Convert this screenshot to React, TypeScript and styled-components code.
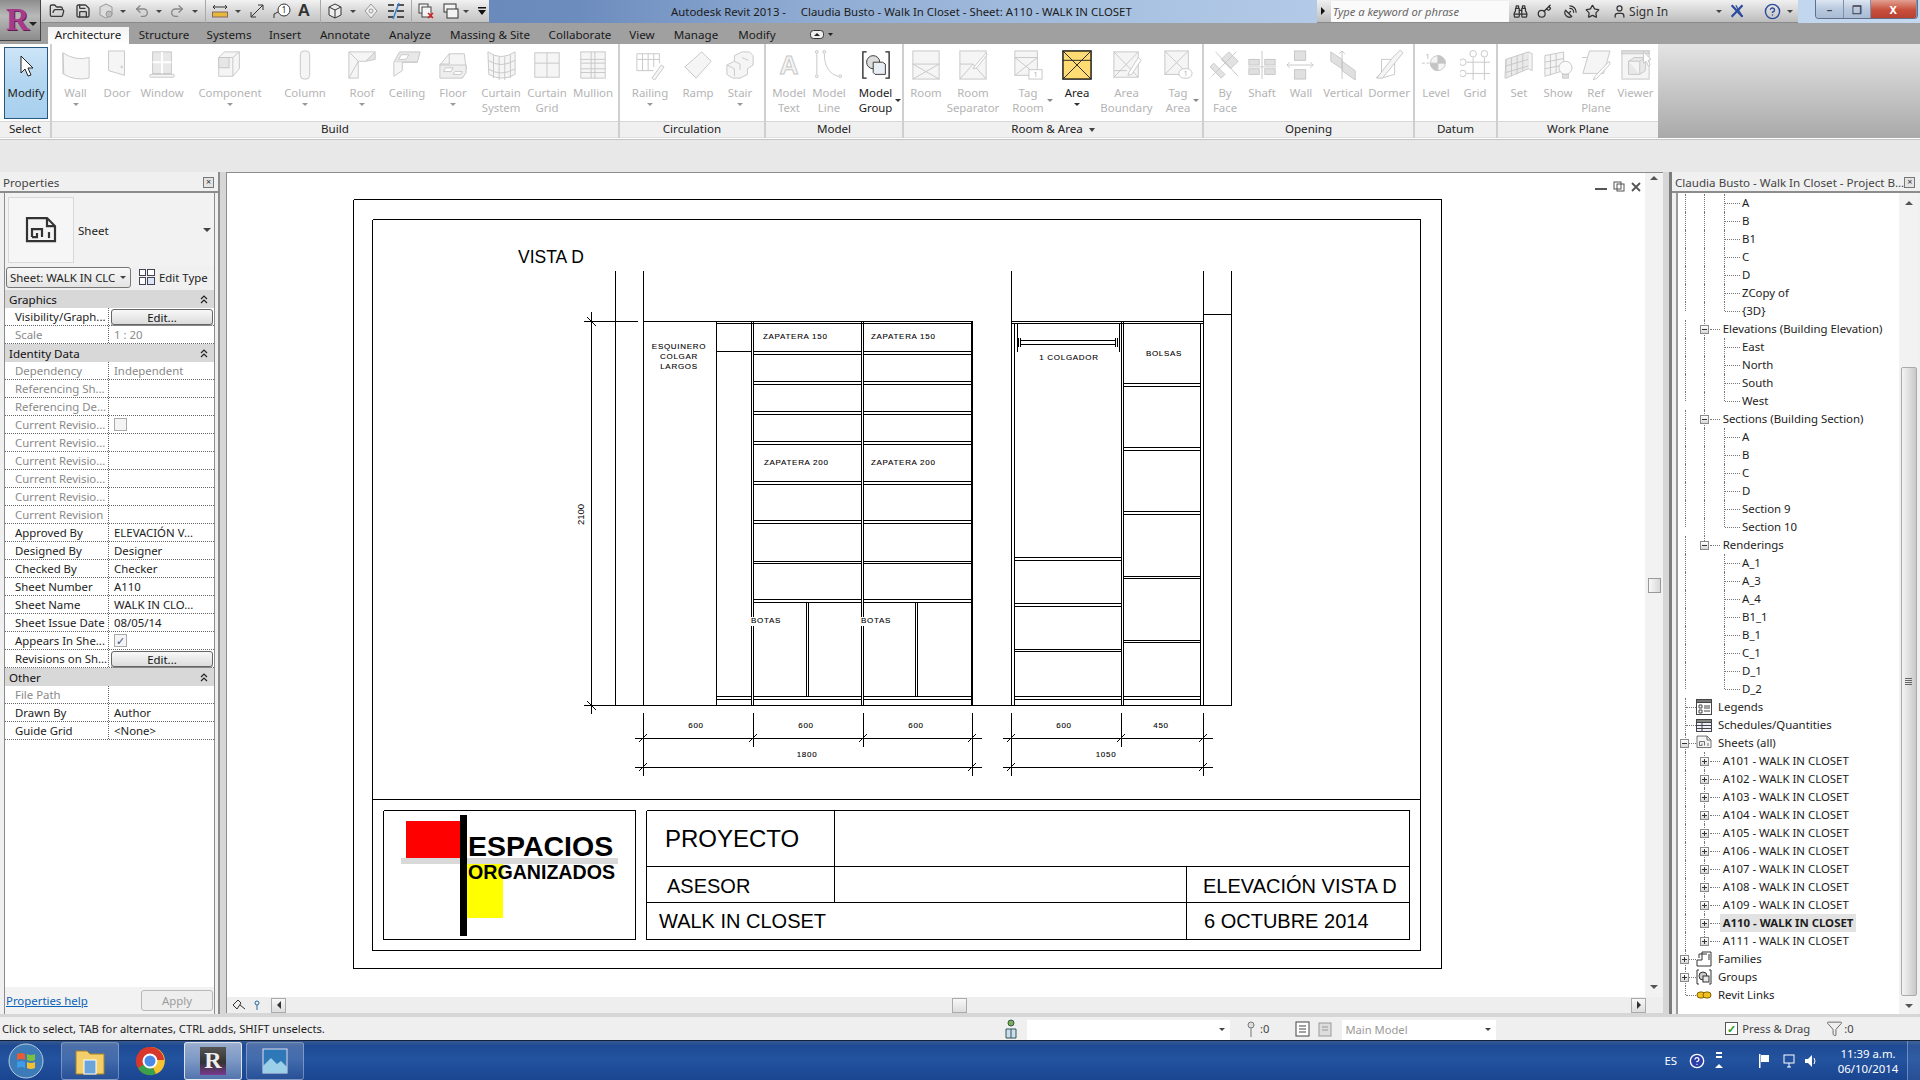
import React from "react";
import styled, { createGlobalStyle } from "styled-components";
import { FolderOpen, Save, Undo2, Redo2, Binoculars, Key, SatelliteDish, Star, User, CircleHelp, Funnel } from "lucide-react";

const FONT = '"Noto Sans", "Liberation Sans", sans-serif';

const Global = createGlobalStyle`
  html, body { margin: 0; padding: 0; overflow: hidden; background: #e8e8e8; }
  * { box-sizing: border-box; }
  #root { width: 1920px; height: 1080px; }
`;

const Page = styled.div`
  position: relative; width: 1920px; height: 1080px; display: flex; flex-direction: column;
  font-family: ${FONT}; font-size: 11.4px; color: #222; background: #e8e8e8; overflow: hidden;
`;

/* ---------- placement helper: turns centres into flow margins ---------- */
function place<T extends { c: number; w: number }>(items: T[], start: number) {
  let x = start;
  return items.map((it) => {
    const ml = it.c - it.w / 2 - x;
    x = it.c + it.w / 2;
    return { ...it, ml };
  });
}

/* ---------- title bar ---------- */
const TitleBar = styled.header`
  height: 23px; display: flex; align-items: stretch;
  background: linear-gradient(90deg, #5f7fb2 0%, #6c8cbe 30%, #8fabd2 42%, #aac3e2 60%, #bcd2ec 78%, #c4d8ef 100%);
`;
const Qat = styled.div`
  margin-left: 40px; width: 449px; display: flex; align-items: center;
  background: linear-gradient(#f2f2f2, #d8d8d8 50%, #c4c4c4); border-bottom: 1px solid #8a8a8a;
`;
const QatItem = styled.span<{ $w: number; $ml: number }>`
  flex: none; width: ${(p) => p.$w}px; margin-left: ${(p) => p.$ml}px; height: 18px;
  display: flex; align-items: center; justify-content: center; color: #3c3c3c;
`;
const QatSep = styled.span<{ $w: number; $ml: number }>`
  flex: none; width: 1px; margin-left: ${(p) => p.$ml}px; height: 23px; background: #a8a8a8;
`;
const QatA = styled.span`
  font: bold 17px "Liberation Sans", sans-serif; color: #333;
`;
const Caret = styled.span`
  width: 0; height: 0; border-left: 3px solid transparent; border-right: 3px solid transparent; border-top: 3px solid #444;
`;
const TitleText = styled.div`
  margin-left: 182px; width: 645.7px; line-height: 23px; font-size: 11.4px; color: #1b1b1b; white-space: pre;
`;
const Search = styled.div`
  width: 481px; display: flex; align-items: center; position: relative;
  background: linear-gradient(#f0f0f0, #d4d4d4 55%, #bcbcbc); border-bottom: 1px solid #8a8a8a;
`;
const SearchArrow = styled.span`
  margin-left: 4px; width: 0; height: 0; border-top: 4px solid transparent; border-bottom: 4px solid transparent; border-left: 4px solid #111;
`;
const SearchInput = styled.div`
  margin-left: 6px; width: 178px; height: 21px; background: #fafafa; font-style: italic; color: #666;
  font-size: 11.2px; line-height: 22px; padding-left: 2px;
`;
const SearchTool = styled.span<{ $w: number; $ml: number }>`
  flex: none; width: ${(p) => p.$w}px; margin-left: ${(p) => p.$ml}px;
  display: flex; align-items: center; justify-content: center; color: #333; font-size: 12px; white-space: nowrap;
`;
const WinButtons = styled.div`
  margin-left: 17px; width: 103px; height: 19px; display: flex; border: 1px solid #60708a; border-top: 0; border-radius: 0 0 4px 4px; overflow: hidden;
`;
const WinBtn = styled.span<{ $w: number; $close?: boolean }>`
  width: ${(p) => p.$w}px; display: flex; align-items: center; justify-content: center; color: ${(p) => (p.$close ? "#fff" : "#445")};
  font-size: 11px; font-weight: bold;
  background: ${(p) => (p.$close ? "linear-gradient(#e2a092, #c8503c 55%, #b84030)" : "linear-gradient(#dde6f2, #b9c9de 50%, #a9bcd4)")};
  border-right: 1px solid #8090a8;
`;

/* ---------- application button ---------- */
const AppButton = styled.div`
  position: absolute; left: 0; top: 0; width: 41px; height: 41px; background: linear-gradient(#8d8d8d, #b9b9b9 40%, #8c8c8c);
  border: 1px solid #444; border-top: 0; border-left: 0;
`;
const AppLogo = styled.span`
  position: absolute; left: 6px; top: 2px; font: bold 32px/34px "Liberation Serif", serif; color: #a83a8c; text-shadow: 1px 1px 0 #5c2050;
`;
const AppCaret = styled.span`
  position: absolute; right: 3px; top: 22px; border-left: 4px solid transparent; border-right: 4px solid transparent; border-top: 4px solid #222;
`;

/* ---------- tabs ---------- */
const TabRow = styled.nav`
  height: 21px; display: flex; align-items: flex-end; background: #a0a0a0;
`;
const Tab = styled.span<{ $w: number; $ml: number; $active?: boolean }>`
  flex: none; width: ${(p) => p.$w}px; margin-left: ${(p) => p.$ml}px; height: 17px; line-height: 16px; padding-bottom: 2px; text-align: center; white-space: nowrap;
  font-size: 11.6px; color: #1a1a1a; display: flex; align-items: center; justify-content: center;
  background: ${(p) => (p.$active ? "linear-gradient(#f2f2f2, #fff)" : "transparent")};
`;

/* ---------- ribbon ---------- */
const Ribbon = styled.section`
  height: 94px; display: flex;
`;
const PanelGroup = styled.div`
  display: flex; background: #cfcfcf;
`;
const RibbonFill = styled.div`
  flex: 1; background: linear-gradient(#e4e4e4, #a9a9a9);
`;
const Panel = styled.div<{ $w: number; $ml: number }>`
  width: ${(p) => p.$w}px; margin-left: ${(p) => p.$ml}px; display: flex; flex-direction: column; background: #fff;
`;
const PanelBody = styled.div`
  height: 77px; display: flex; background: #fff;
`;
const PanelLabel = styled.div`
  height: 17px; background: #f0f0f0; border-top: 1px solid #d8d8d8; border-bottom: 1px solid #e0e0e0; text-align: center; line-height: 13px; font-size: 11.6px; color: #222;
`;
const PanelCaret = styled.span`
  display: inline-block; margin-left: 6px; vertical-align: 1px; border-left: 3px solid transparent; border-right: 3px solid transparent; border-top: 4px solid #444;
`;
const RibbonButton = styled.div<{ $w: number; $ml: number; $on?: boolean }>`
  position: relative; flex: none; width: ${(p) => p.$w}px; margin-left: ${(p) => p.$ml}px; display: flex; flex-direction: column; align-items: center;
  padding-top: 6px; color: ${(p) => (p.$on ? "#1c1c1c" : "#b4b4b4")}; line-height: 15px; white-space: nowrap;
`;
const IconSlot = styled.div`
  width: 30px; height: 30px; margin-bottom: 5px; flex: none;
`;
const ArrowDown = styled.span<{ $on?: boolean }>`
  margin-top: 3px; border-left: 3px solid transparent; border-right: 3px solid transparent; border-top: 3px solid ${(p) => (p.$on ? "#333" : "#999")};
`;
const SideArrow = styled.span<{ $off: number; $on?: boolean }>`
  position: absolute; top: 55px; left: calc(50% + ${(p) => p.$off}px); border-left: 3px solid transparent; border-right: 3px solid transparent; border-top: 3px solid ${(p) => (p.$on ? "#333" : "#888")};
`;
const ModifyButton = styled.div`
  margin: 3px 0 0 4px; width: 44px; height: 72px; border: 1px solid #28587e; background: linear-gradient(#cde4f7, #b2d6f0 50%, #a8d0ee);
  display: flex; flex-direction: column; align-items: center; padding-top: 7px; color: #222;
`;
const ModifyLabel = styled.span`
  margin-top: 6px;
`;
const Band = styled.div`
  height: 34px; background: #e8e8e8; border-top: 1px solid #fff; box-shadow: inset 0 1px 0 #c4c4c4;
`;

/* ---------- main ---------- */
const Main = styled.main`
  height: 845px; display: flex; background: #d6d6d6;
`;
const Props = styled.aside`
  width: 220px; height: 842px; display: flex; flex-direction: column; background: #f0f0f0; border-right: 2px solid #8c8c8c; flex: none;
`;
const DockTitle = styled.div<{ $pr: number }>`
  height: 21px; flex: none; display: flex; align-items: center; justify-content: space-between; padding: 2px ${(p) => p.$pr}px 0 3px; font-size: 11.6px; color: #444; border-bottom: 2px solid #8c8c8c; white-space: nowrap;
`;
const DockClose = styled.span`
  width: 11px; height: 11px; border: 1px solid #777; background: #e4e4e4; color: #333; font-size: 9px; line-height: 8px; text-align: center;
`;
const PropBody = styled.div`
  flex: 1; margin-left: 4px; display: flex; flex-direction: column; border-left: 1px solid #8c8c8c; margin-right: 3px; border-right: 1px solid #8c8c8c; background: #fff;
`;
const TypeBox = styled.div`
  height: 73px; flex: none; display: flex; align-items: center; padding: 1px 0 0 3px; background: #f2f2f2;
`;
const TypeThumb = styled.div`
  width: 66px; height: 66px; background: #f6f6f6; border: 1px solid #d8d8d8; display: flex; align-items: center; justify-content: center;
`;
const TypeName = styled.span`
  margin-left: 4px; font-size: 11.6px; flex: 1;
`;
const TypeCaret = styled.span`
  margin-right: 3px; border-left: 4px solid transparent; border-right: 4px solid transparent; border-top: 4px solid #444;
`;
const SelectorRow = styled.div`
  height: 24px; flex: none; display: flex; align-items: center; background: #f0f0f0; padding-bottom: 2px;
`;
const Selector = styled.div`
  margin-left: 1px; width: 125px; height: 21px; border: 1px solid #777; border-radius: 3px; background: linear-gradient(#f8f8f8, #e4e4e4); display: flex; align-items: center; justify-content: space-between; padding: 0 4px 0 3px; font-size: 11.4px; white-space: nowrap; overflow: hidden;
`;
const EditType = styled.div`
  margin-left: 8px; display: flex; align-items: center; gap: 4px; font-size: 11.4px; white-space: nowrap;
`;
const GroupRow = styled.div`
  height: 18px; flex: none; background: #d8d8d8; display: flex; align-items: center; justify-content: space-between; padding: 0 6px 0 4px; font-size: 11.6px; color: #111;
`;
const PropRow = styled.div<{ $dim?: boolean }>`
  height: 18px; flex: none; display: grid; grid-template-columns: 104px 1fr; border-bottom: 1px dotted #666; line-height: 17px; font-size: 11.4px; color: ${(p) => (p.$dim ? "#8a8a8a" : "#1c1c1c")}; white-space: nowrap;
`;
const PropKey = styled.span`
  padding-left: 10px; border-right: 1px dotted #666; overflow: hidden;
`;
const PropVal = styled.span`
  padding-left: 5px; display: flex; align-items: center;
`;
const EditBtn = styled.span`
  margin-left: -3px; width: 102px; height: 16px; border: 1px solid #666; border-radius: 3px; background: linear-gradient(#f8f8f8, #dcdcdc); text-align: center; line-height: 15px; color: #111; box-shadow: 0 1px 0 #888;
`;
const CheckBox = styled.span`
  width: 13px; height: 13px; border: 1px solid #aaa; background: #f4f4f4; display: flex; align-items: center; justify-content: center; color: #45508c; font-size: 11px; line-height: 11px;
`;
const PressCheck = styled(CheckBox)`
  color: #2a9a2a; font-weight: bold; border-color: #555; background: #fff;
`;
const PropFoot = styled.div`
  height: 27px; margin-top: auto; flex: none; display: flex; align-items: center; justify-content: space-between; padding: 0 1px 1px 1px; background: #f2f2f2;
`;
const HelpLink = styled.span`
  color: #0a62b8; text-decoration: underline; font-size: 11.4px;
`;
const ApplyBtn = styled.span`
  width: 72px; height: 21px; border: 1px solid #b8b8b8; border-radius: 3px; background: #eee; color: #9c9c9c; text-align: center; line-height: 19px;
`;

/* ---------- canvas ---------- */
const Canvas = styled.div`
  margin-left: 6px; width: 1437px; height: 841px; flex: none; display: flex; flex-direction: column; background: #fff; border: 1px solid #8c8c8c; border-bottom: 0; border-right: 0;
`;
const CanvasTop = styled.div`
  flex: 1; display: flex; min-height: 0;
`;
const SheetSvg = styled.svg`
  display: block; width: 1418px; height: 824px; flex: none; background: #fff;
`;
const VScroll = styled.div`
  flex: 1; background: #f2f2f2; display: flex; flex-direction: column; align-items: center; padding-top: 3px; color: #444;
`;
const ScrollUp = styled.span`
  border-left: 4px solid transparent; border-right: 4px solid transparent; border-bottom: 4px solid #555;
`;
const ScrollDn = styled.span`
  display: block; border-left: 4px solid transparent; border-right: 4px solid transparent; border-top: 4px solid #555;
`;
const VThumb = styled.span`
  width: 13px; height: 15px; margin-top: 398px; margin-bottom: auto; border: 1px solid #999; background: linear-gradient(90deg, #f8f8f8, #d8d8d8);
`;
const VBottom = styled.span`
  margin-bottom: 8px; display: block;
`;
const HScroll = styled.div`
  height: 16px; flex: none; background: #eee; display: flex; align-items: center; color: #555;
`;
const NavGlyph = styled.span`
  margin-left: 5px; display: flex; gap: 8px; align-items: center; width: 39px;
`;
const HBtn = styled.span<{ $ml: number }>`
  margin-left: ${(p) => p.$ml}px; width: 15px; height: 15px; border: 1px solid #aaa; background: linear-gradient(#f8f8f8, #ddd); display: flex; align-items: center; justify-content: center; flex: none;
`;
const LeftTri = styled.span`
  border-top: 4px solid transparent; border-bottom: 4px solid transparent; border-right: 4px solid #333;
`;
const RightTri = styled.span`
  border-top: 4px solid transparent; border-bottom: 4px solid transparent; border-left: 4px solid #333;
`;
const CadText = styled.text<{ $size?: number; $sp?: number; $bold?: boolean; $heavy?: boolean }>`
  font-family: "Liberation Sans", sans-serif; font-size: ${(p) => p.$size ?? 8}px; letter-spacing: ${(p) => p.$sp ?? 0.7}px;
  font-weight: ${(p) => (p.$bold ? "bold" : "normal")}; fill: #000;
  stroke: ${(p) => (p.$heavy ? "#000" : "none")}; stroke-width: ${(p) => (p.$heavy ? 0.1 : 0)}px;
`;

/* ---------- project browser ---------- */
const Browser = styled.aside`
  margin-left: 6px; flex: 1; height: 842px; display: flex; flex-direction: column; background: #f0f0f0; border-left: 3px solid #7c7c7c;
`;
const BrowserBody = styled.div`
  flex: 1; display: flex; margin: 0 5px 0 4px; border-left: 2px solid #9a9a9a; background: #fff; min-height: 0;
`;
const Tree = styled.div`
  width: 221px; flex: none; padding-top: 1px; background: #fff; overflow: hidden;
`;
const TreeRow = styled.div<{ $x: number; $sel?: boolean }>`
  position: relative; height: 18px; line-height: 18px; padding-left: ${(p) => p.$x}px; font-size: 11.4px; color: #1c1c1c; white-space: nowrap; font-weight: ${(p) => (p.$sel ? "bold" : "normal")};
`;
const TreeLabel = styled.span<{ $sel?: boolean }>`
  display: inline-block; height: 18px; padding: 0 3px; margin-left: -3px; background: ${(p) => (p.$sel ? "#e2e2e2" : "transparent")};
`;
const VGuide = styled.span<{ $x: number; $half?: boolean }>`
  position: absolute; left: ${(p) => p.$x}px; top: 0; height: ${(p) => (p.$half ? "9px" : "18px")}; border-left: 1px dotted #777;
`;
const HGuide = styled.span<{ $x: number; $w: number }>`
  position: absolute; left: ${(p) => p.$x}px; top: 9px; width: ${(p) => p.$w}px; border-top: 1px dotted #777;
`;
const Toggle = styled.span<{ $x: number; $open?: boolean }>`
  position: absolute; left: ${(p) => p.$x}px; top: 5px; width: 9px; height: 9px; border: 1px solid #8a8a8a; background: linear-gradient(#fff, #d8d8d8);
  &::before { content: ""; position: absolute; left: 1px; right: 1px; top: 3px; height: 1px; background: #333; }
  &::after { content: ""; position: absolute; top: 1px; bottom: 1px; left: 3px; width: 1px; background: #333; display: ${(p) => (p.$open ? "none" : "block")}; }
`;
const TreeIcon = styled.span<{ $x: number }>`
  position: absolute; left: ${(p) => p.$x}px; top: 1px; width: 16px; height: 16px; background: #fff;
`;
const BrowserScroll = styled.div`
  flex: 1; background: #f2f2f2; display: flex; flex-direction: column; align-items: center; padding-top: 8px;
`;
const BThumb = styled.div`
  width: 16px; height: 629px; margin-top: 162px; border: 1px solid #aaa; border-radius: 2px; background: linear-gradient(90deg, #f4f4f4, #c8c8c8); display: flex; flex-direction: column; align-items: center; justify-content: center; gap: 1px;
`;
const Grip = styled.i`
  width: 7px; height: 1px; background: #666;
`;
const BDown = styled.span`
  margin-top: 8px; border-left: 4px solid transparent; border-right: 4px solid transparent; border-top: 4px solid #555;
`;

/* ---------- status ---------- */
const Status = styled.footer`
  height: 23px; display: flex; align-items: center; background: #efefef; font-size: 11.2px; color: #222;
`;
const StatusText = styled.span`
  margin-left: 2px; width: 998px; flex: none; white-space: nowrap;
`;
const StatusInput = styled.span<{ $w: number; $ml: number }>`
  margin-left: ${(p) => p.$ml}px; width: ${(p) => p.$w}px; height: 20px; margin-top: 2px; flex: none; background: #fff; color: #999; line-height: 20px; padding: 0 5px 0 3px; display: flex; align-items: center; justify-content: space-between;
`;
const StatusTool = styled.span<{ $ml: number }>`
  margin-left: ${(p) => p.$ml}px; flex: none; display: flex; align-items: center; gap: 1px; white-space: nowrap; color: #444;
`;

/* ---------- taskbar ---------- */
const Taskbar = styled.footer`
  height: 40px; display: flex; align-items: center; position: relative; background: linear-gradient(#35598f 0, #1f4a94 12%, #23539f 45%, #1a4590 100%); border-top: 1px solid #16223a; color: #fff;
`;
const Orb = styled.div`
  margin-left: 6px; width: 40px; height: 38px; display: flex; align-items: center; justify-content: center;
`;
const TaskBtn = styled.div<{ $ml: number; $active?: boolean; $plain?: boolean }>`
  margin-left: ${(p) => p.$ml}px; width: 58px; height: 38px; flex: none; display: flex; align-items: center; justify-content: center;
  border: 1px solid ${(p) => (p.$plain ? "transparent" : p.$active ? "rgba(255,255,255,.75)" : "rgba(255,255,255,.3)")}; border-radius: 3px;
  background: ${(p) => (p.$plain ? "transparent" : p.$active ? "linear-gradient(rgba(255,255,255,.55), rgba(255,255,255,.25))" : "linear-gradient(rgba(255,255,255,.22), rgba(255,255,255,.06))")};
`;
const RevitTile = styled.span`
  width: 26px; height: 28px; display: flex; align-items: center; justify-content: center; font: bold 24px "Liberation Serif", serif; color: #eee; background: linear-gradient(#555, #333 55%, #7a3a90);
`;
const Tray = styled.div`
  margin-left: auto; display: flex; align-items: center; font-size: 11.4px; height: 100%;
`;
const TrayItem = styled.span<{ $ml: number }>`
  margin-left: ${(p) => p.$ml}px; flex: none; display: flex; align-items: center;
`;
const Clock = styled.div`
  margin-left: 14px; width: 72px; text-align: center; line-height: 15px; font-size: 11.4px; white-space: nowrap;
`;
const ShowDesktop = styled.div`
  width: 13px; margin-left: 3px; height: 100%; border-left: 1px solid rgba(255, 255, 255, 0.3); background: rgba(255, 255, 255, 0.06);
`;

/* ---------- ribbon icons ---------- */
const IconSvg = styled.svg`
  display: block;
`;
function Ico({ children, size = 30, stroke = "#c6c6c6", fill = "#f5f5f5" }: { children: React.ReactNode; size?: number; stroke?: string; fill?: string }) {
  return (
    <IconSvg width={size} height={size} viewBox="0 0 32 32" fill={fill} stroke={stroke} strokeWidth={1}>
      {children}
    </IconSvg>
  );
}
const icons: Record<string, React.ReactNode> = {
  wall: <><path d="M2 3q14 9 28 5v22Q15 33 3 26z" /><path d="M2 3v23" /></>,
  door: <><path d="M7 1h17v26L7 22z" /><circle cx="21" cy="18" r="1" /></>,
  window: <><rect x="6" y="2" width="20" height="23" fill="#e8e8e8" /><path d="M16 2v23M6 13h20" stroke="#fff" strokeWidth="2" /><rect x="3" y="26" width="26" height="3" rx="1" /></>,
  component: <><path d="M4 8l6-6h16v18l-7 8H4z" /><path d="M4 8h15v20M19 8l7-6" /><rect x="4" y="8" width="11" height="11" fill="#e6e6e6" /></>,
  column: <rect x="11" y="1" width="10" height="30" rx="4" />,
  roof: <><path d="M2 2h28L20 12h-8v18H2z" /><path d="M2 2l10 10M2 30l10-18" /><path d="M20 12L30 2v8z" fill="#e4e4e4" /></>,
  ceiling: <><path d="M8 2h22l-3 11H2z" fill="#e8e8e8" /><path d="M2 13v15l9-6V13M27 13H11" /><path d="M10 5h8l-3 5H7z" fill="#fff" /></>,
  floor: <><path d="M2 16L12 4v11H2zM12 4h16L30 20H12" /><path d="M2 16h28v8l-4 6H2z" fill="#eee" /><path d="M8 19h8l-2 4H6zM18 23h8l-2 3h-8z" fill="#fff" /></>,
  curtainSys: <><path d="M2 2q14 10 29 0v24q-14 8-28 0z" /><path d="M8 5v25M14 7v25M20 7v25M26 5v25M2 11q14 9 29 0M2 20q14 9 29 0" /></>,
  curtainGrid: <><rect x="3" y="3" width="26" height="26" /><path d="M16 3v26M3 14h26" /></>,
  mullion: <><rect x="3" y="2" width="26" height="28" /><path d="M14 2v28M18 2v28M3 10h26M3 14h26M3 20h26M3 24h26" /></>,
  railing: <><path d="M2 4h24M2 10h24" /><path d="M2 4v18M8 4v18M14 4v18M20 4v14M26 4v10M2 22h18" /><path d="M18 30l10-14 3 2-10 14z" /></>,
  ramp: <><path d="M2 18L20 2l10 10-16 18z" /><path d="M2 18l12 12" /></>,
  stair: <><path d="M2 16l8-4V6l8-4h8l4 4v10l-6 4v6l-8 4H8l-6-4z" /><path d="M10 12l6 3v6M18 8l7 3M2 16l8 4v8" /></>,
  modelText: <><text x="16" y="26" textAnchor="middle" fontFamily="Liberation Sans" fontSize="28" fontWeight="bold" strokeWidth="1">A</text></>,
  modelLine: <><circle cx="3" cy="2" r="1.5" /><circle cx="3" cy="28" r="1.5" /><circle cx="11" cy="2" r="1.5" /><circle cx="28" cy="28" r="1.5" /><path d="M3 4v22M11 4c0 14 6 22 15 24" fill="none" /></>,
  modelGroup: <><path d="M6 2H2v28h4M26 2h4v28h-4" fill="none" stroke="#222" strokeWidth="1.4" /><circle cx="13" cy="13" r="7" fill="#ddd" stroke="#333" /><path d="M13 13h10l3 2v11H15l-2-2z" fill="#e8eef4" stroke="#333" /></>,
  room: <><rect x="2" y="1" width="28" height="30" /><path d="M2 15h28M2 31L30 15M2 15l28 16" /></>,
  separator: <><rect x="2" y="1" width="28" height="30" /><path d="M2 15h14M2 31l14-16M16 15l14 16" /><path d="M18 17L30 3l1 2-11 14-4 1z" fill="#fff" /></>,
  tagRoom: <><rect x="2" y="1" width="24" height="26" /><path d="M2 8h24M2 27L26 8M2 8l24 19" /><rect x="17" y="21" width="14" height="10" fill="#fff" /><text x="24" y="29" textAnchor="middle" fontSize="7" fill="#aaa" stroke="none">1</text></>,
  area: <><rect x="1" y="1" width="30" height="30" fill="#ffdc73" stroke="#111" strokeWidth="1.5" /><path d="M1 11h30M1 31L31 1M1 1l30 30" stroke="#222" /></>,
  areaBound: <><rect x="2" y="2" width="26" height="27" /><path d="M2 2l26 27M2 29L28 2M2 22h14" /><path d="M18 24L28 8l3 3-10 15-4 1z" fill="#fff" /></>,
  tagArea: <><rect x="2" y="1" width="25" height="25" /><path d="M2 1l25 25M2 26L27 1" /><rect x="17" y="20" width="14" height="10" rx="5" fill="#fff" /><text x="24" y="28" textAnchor="middle" fontSize="7" fill="#aaa" stroke="none">1</text></>,
  byFace: <><path d="M4 14L16 26 12 30 0 18zM20 2l10 10-8 8-10-10z" fill="#e2e2e2" /><path d="M6 2l24 26M2 28L28 2" /></>,
  shaft: <><rect x="2" y="10" width="11" height="6" fill="#e0e0e0" /><rect x="19" y="10" width="11" height="6" fill="#e0e0e0" /><rect x="2" y="20" width="11" height="6" fill="#e0e0e0" /><rect x="19" y="20" width="11" height="6" fill="#e0e0e0" /><path d="M16 1v30M1 18h30" /></>,
  opWall: <><rect x="9" y="1" width="12" height="10" fill="#e0e0e0" /><rect x="9" y="21" width="12" height="10" fill="#e0e0e0" /><path d="M1 16h28M4 13l-3 3 3 3M26 13l3 3-3 3" fill="none" /></>,
  vertical: <><path d="M3 2l12 8v10L3 12zM15 12l14 10v10L15 22z" fill="#e0e0e0" /><path d="M15 1v30M12 4l3-3 3 3" fill="none" /></>,
  dormer: <><path d="M2 30L30 2" /><path d="M8 10h14v16L8 30z" fill="none" /><path d="M20 8l8-8 3 3-22 27-6 0z" /></>,
  level: <><path d="M1 14h8" strokeDasharray="3 2" /><circle cx="18" cy="14" r="8" /><path d="M18 6a8 8 0 0 1 8 8h-8zM18 14h-8a8 8 0 0 0 8 8z" fill="#c4c4c4" /><text x="5" y="10" fontSize="7" fill="#aaa" stroke="none">1</text></>,
  grid: <><circle cx="14" cy="4" r="3.5" fill="none" /><circle cx="26" cy="4" r="3.5" fill="none" /><circle cx="3" cy="13" r="3.5" fill="none" /><circle cx="3" cy="25" r="3.5" fill="none" /><path d="M14 8v24M26 8v24M7 13h25M7 25h25" /></>,
  wpSet: <><path d="M2 10l24-8v18L2 30z" fill="#eaeaea" /><path d="M2 10l-1 20h1M8 8v20M14 6v20M20 4v18M2 17l24-7M2 24l24-7" /><path d="M26 2l4 2v18l-4-2" /></>,
  wpShow: <><path d="M2 6l20-4v20L2 28z" /><path d="M8 5v22M14 4v20M2 13l20-4M2 20l20-4" /><circle cx="24" cy="19" r="7" fill="#fafafa" /><rect x="21" y="26" width="6" height="4" fill="#e0e0e0" /></>,
  refPlane: <><path d="M9 1h22l-7 24H2z" /><path d="M1 8h6M30 12L15 28l-2 4 4-2 14-15z" fill="#fff" /></>,
  viewer: <><rect x="1" y="1" width="29" height="30" /><rect x="1" y="1" width="29" height="3" fill="#e0e0e0" /><path d="M8 12l6-4h12v14l-6 4H8z" fill="#e8e8e8" /><path d="M8 12h12v14M20 12l6-4" /><path d="M24 2l8 8-3 1 2 5-2 1-2-5-3 2z" fill="#fff" /></>,
};

type Btn = { c: number; w: number; i: string; t: string[]; on?: boolean; down?: boolean; side?: number };
const b = (c: number, i: string, t: string, opt: Partial<Btn> = {}): Btn => ({ c, w: 36, i, t: t.split("|"), ...opt });
const panels: { x0: number; x1: number; label: string; caret?: boolean; btns: Btn[] }[] = [
  {
    x0: 52, x1: 618, label: "Build", btns: [
      b(75.5, "wall", "Wall", { down: true }), b(117, "door", "Door"), b(162, "window", "Window"), b(230, "component", "Component", { down: true }),
      b(305, "column", "Column", { down: true }), b(362, "roof", "Roof", { down: true }), b(407, "ceiling", "Ceiling"), b(453, "floor", "Floor", { down: true }),
      b(501, "curtainSys", "Curtain|System"), b(547, "curtainGrid", "Curtain|Grid"), b(593, "mullion", "Mullion"),
    ],
  },
  { x0: 620, x1: 764, label: "Circulation", btns: [b(650, "railing", "Railing", { down: true }), b(698, "ramp", "Ramp"), b(740, "stair", "Stair", { down: true })] },
  { x0: 766, x1: 902, label: "Model", btns: [b(789, "modelText", "Model|Text"), b(829, "modelLine", "Model|Line"), b(875.5, "modelGroup", "Model|Group", { on: true, side: 19 })] },
  {
    x0: 904, x1: 1202, label: "Room & Area", caret: true, btns: [
      b(926, "room", "Room"), b(973, "separator", "Room|Separator"), b(1028, "tagRoom", "Tag|Room", { side: 19 }), b(1077, "area", "Area", { on: true, down: true }),
      b(1126.5, "areaBound", "Area|Boundary"), b(1178, "tagArea", "Tag|Area", { side: 15 }),
    ],
  },
  { x0: 1204, x1: 1413, label: "Opening", btns: [b(1225, "byFace", "By|Face"), b(1262, "shaft", "Shaft"), b(1301, "opWall", "Wall"), b(1343, "vertical", "Vertical"), b(1389, "dormer", "Dormer")] },
  { x0: 1415, x1: 1496, label: "Datum", btns: [b(1436, "level", "Level"), b(1475, "grid", "Grid")] },
  { x0: 1498, x1: 1658, label: "Work Plane", btns: [b(1519, "wpSet", "Set"), b(1558, "wpShow", "Show"), b(1596, "refPlane", "Ref|Plane"), b(1635.5, "viewer", "Viewer")] },
];

const tabs = [
  { t: "Architecture", c: 88, w: 81, active: true }, { t: "Structure", c: 164, w: 50 }, { t: "Systems", c: 229, w: 46 }, { t: "Insert", c: 285, w: 32 },
  { t: "Annotate", c: 345, w: 50 }, { t: "Analyze", c: 410, w: 44 }, { t: "Massing & Site", c: 490, w: 84 }, { t: "Collaborate", c: 580, w: 64 },
  { t: "View", c: 642, w: 28 }, { t: "Manage", c: 696, w: 44 }, { t: "Modify", c: 757, w: 40 },
];

/* ---------- quick access toolbar ---------- */
function Q3D() {
  return <svg width="18" height="18" viewBox="0 0 18 18" fill="#eee" stroke="#333"><path d="M3 5l6-3 6 3v8l-6 3-6-3z" /><path d="M3 5l6 3 6-3M9 8v8" /></svg>;
}
const qatItems: { c: number; w: number; n: React.ReactNode; sep?: boolean }[] = [
  { c: 57, w: 18, n: <FolderOpen size={16} /> }, { c: 83, w: 18, n: <Save size={16} /> },
  { c: 106, w: 18, n: <svg width="18" height="18" viewBox="0 0 18 18" fill="#ddd" stroke="#999"><path d="M3 5l6-3 6 3v8l-6 3-6-3z" /><circle cx="12" cy="12" r="3" fill="#bbb" /></svg> },
  { c: 123, w: 8, n: <Caret /> }, { c: 142, w: 18, n: <Undo2 size={16} color="#888" /> }, { c: 159, w: 8, n: <Caret /> },
  { c: 177, w: 18, n: <Redo2 size={16} color="#888" /> }, { c: 195, w: 8, n: <Caret /> }, { c: 205, w: 1, n: null, sep: true },
  { c: 220, w: 18, n: <svg width="18" height="18" viewBox="0 0 18 18" fill="none" stroke="#333"><path d="M2 5h14M4 3L2 5l2 2M14 3l2 2-2 2" /><rect x="1.500" y="10" width="15" height="5" fill="#e8b838" stroke="#866" /></svg> },
  { c: 238, w: 8, n: <Caret /> },
  { c: 257, w: 18, n: <svg width="18" height="18" viewBox="0 0 18 18" fill="none" stroke="#333"><path d="M3 15L15 3M3 10v5h5M10 3h5v5" /></svg> },
  { c: 282, w: 20, n: <svg width="20" height="18" viewBox="0 0 20 18" fill="#fff" stroke="#333"><circle cx="12" cy="8" r="6" /><path d="M2 16v-4l4-2" fill="none" /><text x="12" y="11" fontSize="8" textAnchor="middle" fill="#222" stroke="none">1</text></svg> },
  { c: 304, w: 16, n: <QatA>A</QatA> }, { c: 320, w: 1, n: null, sep: true }, { c: 335, w: 18, n: <Q3D /> }, { c: 353, w: 8, n: <Caret /> },
  { c: 371, w: 16, n: <svg width="16" height="18" viewBox="0 0 16 18" fill="#eee" stroke="#999"><path d="M8 2l6 7-6 7-6-7z" /><circle cx="8" cy="9" r="2" /></svg> },
  { c: 396, w: 18, n: <svg width="18" height="18" viewBox="0 0 18 18" fill="none" stroke="#222"><path d="M1 3h6M1 9h6M1 15h6M10 3h7M10 9h7M10 15h7" strokeWidth="1.5" /><path d="M12 1L6 17" stroke="#3a7fd0" strokeWidth="1.5" /></svg> },
  { c: 411, w: 1, n: null, sep: true },
  { c: 426, w: 18, n: <svg width="18" height="18" viewBox="0 0 18 18" fill="#f4f4f4" stroke="#444"><rect x="2" y="2" width="9" height="9" /><rect x="5" y="5" width="9" height="10" /><path d="M11 11l5 5M16 11l-5 5" stroke="#d02020" strokeWidth="1.6" /></svg> },
  { c: 451, w: 18, n: <svg width="18" height="18" viewBox="0 0 18 18" fill="#f4f4f4" stroke="#333"><rect x="2" y="2" width="12" height="8" /><rect x="5" y="7" width="11" height="9" /></svg> },
  { c: 466, w: 8, n: <Caret /> },
  { c: 482, w: 10, n: <svg width="10" height="10" viewBox="0 0 10 10" fill="#111"><rect x="1" y="1" width="8" height="1.500" /><path d="M1 4h8L5 9z" /></svg> },
];

const searchTools = [
  { c: 1521, w: 16, n: <Binoculars size={15} /> }, { c: 1545, w: 16, n: <Key size={15} /> }, { c: 1570.6, w: 16, n: <SatelliteDish size={15} /> },
  { c: 1593, w: 16, n: <Star size={15} /> }, { c: 1619.6, w: 16, n: <User size={15} /> }, { c: 1649, w: 36, n: "Sign In" }, { c: 1719, w: 8, n: <Caret /> },
  { c: 1738, w: 16, n: <svg width="15" height="14" viewBox="0 0 18 16" fill="none" stroke="#2a4a9c" strokeWidth="2.6"><path d="M2 1l13 14M15 1L2 15" /><path d="M7 1l8 14" strokeWidth="1.4" /></svg> },
  { c: 1772.6, w: 18, n: <CircleHelp size={17} color="#2a4a9c" /> }, { c: 1790, w: 8, n: <Caret /> },
];

/* ---------- properties ---------- */
type P = { k: string; v?: string; dim?: boolean; edit?: boolean; check?: "on" | "off" };
const SEC: (P | string)[] = [
  "Graphics", { k: "Visibility/Graph...", edit: true }, { k: "Scale", v: "1 : 20", dim: true },
  "Identity Data", { k: "Dependency", v: "Independent", dim: true }, { k: "Referencing Sh...", dim: true }, { k: "Referencing De...", dim: true },
  { k: "Current Revisio...", dim: true, check: "off" }, { k: "Current Revisio...", dim: true }, { k: "Current Revisio...", dim: true }, { k: "Current Revisio...", dim: true },
  { k: "Current Revisio...", dim: true }, { k: "Current Revision", dim: true }, { k: "Approved By", v: "ELEVACIÓN V..." }, { k: "Designed By", v: "Designer" }, { k: "Checked By", v: "Checker" },
  { k: "Sheet Number", v: "A110" }, { k: "Sheet Name", v: "WALK IN CLO..." }, { k: "Sheet Issue Date", v: "08/05/14" }, { k: "Appears In She...", check: "on" }, { k: "Revisions on Sh...", edit: true },
  "Other", { k: "File Path", dim: true }, { k: "Drawn By", v: "Author" }, { k: "Guide Grid", v: "<None>" },
];
const Chev = () => <svg width="8" height="9" viewBox="0 0 8 9" fill="none" stroke="#222" strokeWidth="1.2"><path d="M1 4l3-3 3 3M1 8l3-3 3 3" /></svg>;
const SheetGlyph = ({ s = 32, c = "#333", w = 2.2 }: { s?: number; c?: string; w?: number }) => (
  <svg width={s} height={s * 0.85} viewBox="0 0 32 27" fill="#f4f4f4" stroke={c} strokeWidth={w}><path d="M2 2h20l8 8v15H2z" /><path d="M22 2v8h8M7 21v-8h10v8M7 21h5v-4" fill="none" /><path d="M24 16v6" /></svg>
);

/* ---------- tree ---------- */
type T = { t: string; k: "leaf" | "group" | "top"; open?: boolean; hasT?: boolean; sel?: boolean; last?: boolean; icon?: string; g1?: boolean; g1half?: boolean };
const leaf = (t: string, last = false, g1 = true): T => ({ t, k: "leaf", last, g1 });
const grp = (t: string, open: boolean, g1 = true, sel = false, g1half = false): T => ({ t, k: "group", open, hasT: true, g1, sel, g1half });
const treeRows: T[] = [
  leaf("A"), leaf("B"), leaf("B1"), leaf("C"), leaf("D"), leaf("ZCopy of"), leaf("{3D}", true),
  grp("Elevations (Building Elevation)", true), leaf("East"), leaf("North"), leaf("South"), leaf("West", true),
  grp("Sections (Building Section)", true), leaf("A"), leaf("B"), leaf("C"), leaf("D"), leaf("Section 9"), leaf("Section 10", true),
  grp("Renderings", true, true, false, true), leaf("A_1", false, false), leaf("A_3", false, false), leaf("A_4", false, false), leaf("B1_1", false, false), leaf("B_1", false, false), leaf("C_1", false, false), leaf("D_1", false, false), leaf("D_2", true, false),
  { t: "Legends", k: "top", icon: "legend" }, { t: "Schedules/Quantities", k: "top", icon: "sched" }, { t: "Sheets (all)", k: "top", icon: "sheet", hasT: true, open: true },
  ...["A101", "A102", "A103", "A104", "A105", "A106", "A107", "A108", "A109"].map((a) => grp(`${a} - WALK IN CLOSET`, false)),
  grp("A110 - WALK IN CLOSET", false, true, true), grp("A111 - WALK IN CLOSET", false, true, false, true),
  { t: "Families", k: "top", icon: "fam", hasT: true }, { t: "Groups", k: "top", icon: "groups", hasT: true }, { t: "Revit Links", k: "top", icon: "links", last: true },
];
const tinyIcons: Record<string, React.ReactNode> = {
  legend: <svg width="16" height="16" viewBox="0 0 16 16" fill="#fff" stroke="#444"><rect x=".5" y=".5" width="15" height="15" /><rect x=".5" y=".5" width="15" height="3" fill="#777" /><path d="M3 6h3v3H3zM3 11h3v3H3zM8 7h6M8 9h6M8 12h6" /></svg>,
  sched: <svg width="16" height="16" viewBox="0 0 16 16" fill="#eef" stroke="#444"><rect x=".5" y="2.500" width="15" height="12" /><rect x=".5" y="2.500" width="15" height="3" fill="#888" /><path d="M.5 8.500h15M.5 11.500h15M6 5.500v9" /></svg>,
  sheet: <SheetGlyph s={16} c="#444" w={1.5} />,
  fam: <svg width="16" height="16" viewBox="0 0 16 16" fill="none" stroke="#333"><path d="M1 15V9h5V1h9v14zM3 7V3h8M13 3v6" /></svg>,
  groups: <svg width="16" height="16" viewBox="0 0 16 16" fill="#ccc" stroke="#333"><path d="M3 1H1v14h2M13 1h2v14h-2" fill="none" /><circle cx="7" cy="7" r="4" /><rect x="7" y="7" width="6" height="6" fill="#e8e8e8" /></svg>,
  links: <svg width="16" height="16" viewBox="0 0 16 16" fill="#f0c020" stroke="#806000"><rect x="1" y="5" width="8" height="6" rx="3" /><rect x="7" y="5" width="8" height="6" rx="3" /></svg>,
};
const X0 = 1678;
function TreeItem({ r }: { r: T }) {
  const lx = r.k === "leaf" ? 1742 : r.k === "group" ? 1722.7 : 1718;
  return (
    <TreeRow $x={lx - X0} $sel={r.sel}>
      <VGuide $x={1685 - X0} $half={r.last} />
      {r.k === "leaf" && <><VGuide $x={1724 - X0} $half={r.last} /><HGuide $x={1725 - X0} $w={15} />{r.g1 && <VGuide $x={1704 - X0} />}</>}
      {r.k === "group" && <><VGuide $x={1704 - X0} $half={r.g1half} /><HGuide $x={1710 - X0} $w={10} /><Toggle $x={1700 - X0} $open={r.open} /></>}
      {r.k === "top" && <><HGuide $x={1686 - X0} $w={10} />{r.hasT && <Toggle $x={1680 - X0} $open={r.open} />}<TreeIcon $x={1696 - X0}>{tinyIcons[r.icon!]}</TreeIcon></>}
      <TreeLabel $sel={r.sel}>{r.t}</TreeLabel>
    </TreeRow>
  );
}

/* ---------- sheet drawing ---------- */
type L = [number, number, number, number];
const lines: L[] = [];
const H = (y: number, a: number, z: number) => lines.push([a, y, z, y]);
const V = (x: number, a: number, z: number) => lines.push([x, a, x, z]);
/* frame */
[[354, 199, 1442, 968], [373, 219, 1421, 950]].forEach(([a, t, r, bt]) => { H(t, a, r); H(bt, a, r); V(a, t, bt); V(r, t, bt); });
H(799, 373, 1421);
/* title block */
[[384, 810, 636, 939], [647, 810, 1410, 939]].forEach(([a, t, r, bt]) => { H(t, a, r); H(bt, a, r); V(a, t, bt); V(r, t, bt); });
V(835, 810, 902); H(866, 647, 1410); H(902, 647, 1410); V(1187, 866, 939);
/* left unit */
H(321, 584, 638); H(321, 644, 973); H(323, 717, 973); H(705, 584, 1232);
V(592, 311, 713); V(616, 270, 705); V(644, 270, 705); V(717, 321, 705);
[752, 754, 862, 864].forEach((x) => { V(x, 321, 616); V(x, 625, 705); });
[972, 973].forEach((x) => { V(x, 321, 705); });
H(351, 717, 752); H(696, 717, 752); H(699, 717, 752);
[[351, 354], [381, 384], [411, 414], [441, 444], [481, 484], [520, 523], [561, 563], [599, 602], [696, 699]].forEach(([u, d]) => {
  H(u, 754, 862); H(d, 754, 862); H(u, 864, 972); H(d, 864, 972);
});
[807, 809, 916, 918].forEach((x) => V(x, 602, 696));
/* right unit */
V(1012, 270, 705); V(1015, 323, 705); V(1122, 321, 705); V(1124, 321, 705); V(1201, 323, 705); V(1204, 270, 705); V(1232, 270, 705);
H(314, 1204, 1232); H(321, 1012, 1204); H(323, 1012, 1204);
[[557, 560], [603, 606], [649, 651], [696, 699]].forEach(([u, d]) => { H(u, 1015, 1122); H(d, 1015, 1122); });
[[383, 386], [447, 450], [511, 514], [576, 578], [640, 642], [696, 699]].forEach(([u, d]) => { H(u, 1124, 1201); H(d, 1124, 1201); });
H(340, 1021, 1116); H(344, 1021, 1116); V(1018, 323, 351); V(1120, 323, 351);
[1019, 1021, 1116, 1118].forEach((x) => V(x, 337, 346));
/* dimensions */
H(738, 635, 982); H(767, 635, 982); H(738, 1003, 1213); H(767, 1003, 1213);
V(644, 712, 775); V(754, 712, 746); V(864, 712, 746); V(973, 712, 775);
V(1012, 712, 775); V(1122, 712, 746); V(1204, 712, 775);
const ticks: [number, number][] = [[644, 738], [754, 738], [864, 738], [973, 738], [644, 767], [973, 767], [1012, 738], [1122, 738], [1204, 738], [1012, 767], [1204, 767]];
const cross: [number, number][] = [[592, 321], [592, 705]];

const cadLabels: { x: number; y: number; t: string; anchor?: "middle" | "start" }[] = [
  { x: 764, y: 339, t: "ZAPATERA 150" }, { x: 872, y: 339, t: "ZAPATERA 150" }, { x: 765, y: 465, t: "ZAPATERA 200" }, { x: 872, y: 465, t: "ZAPATERA 200" },
  { x: 680, y: 349, t: "ESQUINERO", anchor: "middle" }, { x: 680, y: 359, t: "COLGAR", anchor: "middle" }, { x: 680, y: 369, t: "LARGOS", anchor: "middle" },
  { x: 752, y: 623, t: "BOTAS" }, { x: 862, y: 623, t: "BOTAS" }, { x: 1070, y: 360, t: "1 COLGADOR", anchor: "middle" }, { x: 1165, y: 356, t: "BOLSAS", anchor: "middle" },
  { x: 697, y: 728, t: "600", anchor: "middle" }, { x: 807, y: 728, t: "600", anchor: "middle" }, { x: 917, y: 728, t: "600", anchor: "middle" },
  { x: 808, y: 757, t: "1800", anchor: "middle" }, { x: 1065, y: 728, t: "600", anchor: "middle" }, { x: 1162, y: 728, t: "450", anchor: "middle" }, { x: 1107, y: 757, t: "1050", anchor: "middle" },
];

function Sheet() {
  return (
    <SheetSvg viewBox="228 173 1418 824">
      <g stroke="#000" strokeWidth={1} shapeRendering="crispEdges">
        {lines.map(([x1, y1, x2, y2], i) => (
          <line key={i} x1={x1 + 0.5} y1={y1 + 0.5} x2={x2 + 0.5} y2={y2 + 0.5} />
        ))}
      </g>
      <g stroke="#000" strokeWidth={1}>
        {ticks.map(([x, y], i) => <line key={i} x1={x - 4} y1={y + 4} x2={x + 4} y2={y - 4} />)}
        {cross.map(([x, y], i) => <line key={i} x1={x - 4} y1={y - 4} x2={x + 5} y2={y + 5} />)}
      </g>
      {/* logo */}
      <rect x={407} y={821} width={55} height={37} fill="#f00" />
      <rect x={402} y={858} width={217} height={6} fill="#d9d9d9" />
      <rect x={468} y={864} width={36} height={54} fill="#ff0" />
      <rect x={461} y={815} width={7} height={121} fill="#000" />
      <CadText x={469} y={856} $size={28.5} $sp={0} $bold>ESPACIOS</CadText>
      <CadText x={469} y={879} $size={19.6} $sp={0} $bold>ORGANIZADOS</CadText>
      {/* title block text */}
      <CadText x={519} y={263} $size={17.5} $sp={0}>VISTA D</CadText>
      <CadText x={666} y={847} $size={24} $sp={0}>PROYECTO</CadText>
      <CadText x={668} y={893} $size={20} $sp={0}>ASESOR</CadText>
      <CadText x={1204} y={893} $size={20} $sp={0}>ELEVACIÓN VISTA D</CadText>
      <CadText x={660} y={928} $size={20} $sp={0}>WALK IN CLOSET</CadText>
      <CadText x={1205} y={928} $size={20} $sp={0}>6 OCTUBRE 2014</CadText>
      {cadLabels.map((l, i) => (
        <CadText key={i} x={l.x} y={l.y} textAnchor={l.anchor ?? "start"} $heavy>{l.t}</CadText>
      ))}
      <CadText x={585} y={525} $size={9.5} $sp={0} transform="rotate(-90 585 525)">2100</CadText>
      {/* view controls over the canvas corner */}
      <g stroke="#555" fill="none">
        <path d="M1596 189h12" strokeWidth={2} />
        <rect x={1618} y={184} width={7} height={7} fill="#fff" />
        <rect x={1615} y={182} width={7} height={7} />
        <path d="M1633 183l8 8M1641 183l-8 8" strokeWidth={1.8} />
      </g>
    </SheetSvg>
  );
}

export default function App() {
  return (
    <Page>
      <Global />
      <TitleBar>
        <Qat>
          {place(qatItems, 40).map((q, i) =>
            q.sep ? <QatSep key={i} $w={q.w} $ml={q.ml} /> : <QatItem key={i} $w={q.w} $ml={q.ml}>{q.n}</QatItem>
          )}
        </Qat>
        <TitleText>{"Autodesk Revit 2013 -     Claudia Busto - Walk In Closet - Sheet: A110 - WALK IN CLOSET"}</TitleText>
        <Search>
          <SearchArrow />
          <SearchInput>Type a keyword or phrase</SearchInput>
          {place(searchTools, 1509).map((s, i) => <SearchTool key={i} $w={s.w} $ml={s.ml}>{s.n}</SearchTool>)}
        </Search>
        <WinButtons>
          <WinBtn $w={29}>–</WinBtn>
          <WinBtn $w={27}>❐</WinBtn>
          <WinBtn $w={47} $close>X</WinBtn>
        </WinButtons>
      </TitleBar>
      <AppButton><AppLogo>R</AppLogo><AppCaret /></AppButton>

      <TabRow>
        {place(tabs, 0).map((t) => <Tab key={t.t} $w={t.w} $ml={t.ml} $active={t.active}>{t.t}</Tab>)}
        <Tab $w={26} $ml={32}>
          <svg width="24" height="10" viewBox="0 0 24 10"><rect x=".5" y=".5" width="13" height="8" rx="3" fill="#eee" stroke="#333" /><path d="M4 6l3-3 3 3z" fill="#222" /><path d="M18 3h5l-2.500 3z" fill="#222" /></svg>
        </Tab>
      </TabRow>

      <Ribbon>
        <PanelGroup>
          <Panel $w={50} $ml={0}>
            <PanelBody>
              <ModifyButton>
                <svg width="14" height="24" viewBox="0 0 14 24" fill="#fff" stroke="#222"><path d="M2 1v17l4-4 3 7 3-1-3-7h5z" /></svg>
                <ModifyLabel>Modify</ModifyLabel>
              </ModifyButton>
            </PanelBody>
            <PanelLabel>Select</PanelLabel>
          </Panel>
          {panels.map((p) => (
            <Panel key={p.label} $w={p.x1 - p.x0} $ml={2}>
              <PanelBody>
                {place(p.btns, p.x0).map((btn) => (
                  <RibbonButton key={btn.c} $w={btn.w} $ml={btn.ml} $on={btn.on}>
                    <IconSlot><Ico>{icons[btn.i]}</Ico></IconSlot>
                    {btn.t.map((l) => <span key={l}>{l}</span>)}
                    {btn.down && <ArrowDown $on={btn.on} />}
                    {btn.side !== undefined && <SideArrow $off={btn.side} $on={btn.on} />}
                  </RibbonButton>
                ))}
              </PanelBody>
              <PanelLabel>{p.label}{p.caret && <PanelCaret />}</PanelLabel>
            </Panel>
          ))}
        </PanelGroup>
        <RibbonFill />
      </Ribbon>
      <Band />

      <Main>
        <Props>
          <DockTitle $pr={4}>Properties<DockClose>×</DockClose></DockTitle>
          <PropBody>
            <TypeBox>
              <TypeThumb><SheetGlyph /></TypeThumb>
              <TypeName>Sheet</TypeName>
              <TypeCaret />
            </TypeBox>
            <SelectorRow>
              <Selector>Sheet: WALK IN CLC<Caret /></Selector>
              <EditType>
                <svg width="16" height="16" viewBox="0 0 16 16" fill="#fff" stroke="#445"><rect x=".5" y=".5" width="6" height="6" /><rect x=".5" y="8.500" width="6" height="7" /><rect x="8.500" y=".5" width="7" height="6" /><rect x="8.500" y="8.500" width="7" height="7" fill="#dde6f4" /></svg>
                Edit Type
              </EditType>
            </SelectorRow>
            {SEC.map((r, i) =>
              typeof r === "string" ? (
                <GroupRow key={i}>{r}<Chev /></GroupRow>
              ) : (
                <PropRow key={i} $dim={r.dim}>
                  <PropKey>{r.k}</PropKey>
                  <PropVal>
                    {r.v}
                    {r.edit && <EditBtn>Edit...</EditBtn>}
                    {r.check && <CheckBox>{r.check === "on" ? "✓" : ""}</CheckBox>}
                  </PropVal>
                </PropRow>
              )
            )}
            <PropFoot>
              <HelpLink>Properties help</HelpLink>
              <ApplyBtn>Apply</ApplyBtn>
            </PropFoot>
          </PropBody>
        </Props>

        <Canvas>
          <CanvasTop>
            <Sheet />
            <VScroll>
              <ScrollUp />
              <VThumb />
              <VBottom><ScrollDn /></VBottom>
            </VScroll>
          </CanvasTop>
          <HScroll>
            <NavGlyph>
              <svg width="14" height="12" viewBox="0 0 14 12" fill="none" stroke="#333"><path d="M1 6l5-5 3 3-4 6zM8 6l5 4" /></svg>
              <svg width="6" height="12" viewBox="0 0 6 12" fill="none" stroke="#2a6a9c"><circle cx="3" cy="4" r="2" /><path d="M3 6v5" /></svg>
            </NavGlyph>
            <HBtn $ml={0}><LeftTri /></HBtn>
            <HBtn $ml={666}>{null}</HBtn>
            <HBtn $ml={664}><RightTri /></HBtn>
          </HScroll>
        </Canvas>

        <Browser>
          <DockTitle $pr={8}>Claudia Busto - Walk In Closet - Project B...<DockClose>×</DockClose></DockTitle>
          <BrowserBody>
            <Tree>{treeRows.map((r, i) => <TreeItem key={i} r={r} />)}</Tree>
            <BrowserScroll>
              <ScrollUp />
              <BThumb><Grip /><Grip /><Grip /><Grip /></BThumb>
              <BDown />
            </BrowserScroll>
          </BrowserBody>
        </Browser>
      </Main>

      <Status>
        <StatusText>Click to select, TAB for alternates, CTRL adds, SHIFT unselects.</StatusText>
        <svg width="22" height="20" viewBox="0 0 22 20" fill="#cde" stroke="#355"><circle cx="11" cy="4" r="3" fill="#7ab04c" /><path d="M6 19v-9h10v9z" /><path d="M11 10v9" /></svg>
        <StatusInput $w={203} $ml={5}><span /><Caret /></StatusInput>
        <StatusTool $ml={13}>
          <svg width="16" height="18" viewBox="0 0 16 18" fill="#ddd" stroke="#777"><circle cx="8" cy="5" r="3" /><path d="M8 8v9" /></svg>:0
        </StatusTool>
        <StatusTool $ml={25}>
          <svg width="18" height="18" viewBox="0 0 18 18" fill="#fff" stroke="#444"><rect x="2" y="2" width="13" height="14" /><path d="M5 6h7M5 9h7M5 12h7" /></svg>
        </StatusTool>
        <StatusTool $ml={4}>
          <svg width="18" height="18" viewBox="0 0 18 18" fill="#ddd" stroke="#999"><rect x="3" y="3" width="12" height="13" /><path d="M6 7h6M6 10h6" /></svg>
        </StatusTool>
        <StatusInput $w={154} $ml={8}>Main Model<Caret /></StatusInput>
        <StatusTool $ml={229}>
          <PressCheck>✓</PressCheck>
          <span>&nbsp;Press &amp; Drag</span>
        </StatusTool>
        <StatusTool $ml={16}><Funnel size={17} strokeWidth={1.2} color="#555" />:0</StatusTool>
      </Status>

      <Taskbar>
        <Orb>
          <svg width="36" height="36" viewBox="0 0 36 36"><circle cx="18" cy="18" r="17" fill="#3c7bb8" stroke="#bcd" /><path d="M9 11q4-2 8 0v6q-4-2-8 0z" fill="#e85c30" /><path d="M19 11q4 2 8 0v6q-4 2-8 0z" fill="#7cc040" /><path d="M9 19q4-2 8 0v6q-4-2-8 0z" fill="#3c9ce8" /><path d="M19 19q4 2 8 0v6q-4 2-8 0z" fill="#f0c030" /></svg>
        </Orb>
        <TaskBtn $ml={15}>
          <svg width="34" height="30" viewBox="0 0 34 30"><path d="M3 5h11l3 3h14v20H3z" fill="#f2cf6a" stroke="#a88420" /><rect x="11" y="14" width="12" height="14" fill="#6ba4d8" stroke="#fff" /></svg>
        </TaskBtn>
        <TaskBtn $ml={2} $plain>
          <svg width="30" height="30" viewBox="0 0 30 30"><circle cx="15" cy="15" r="14" fill="#d8372c" /><path d="M15 15L3 22A14 14 0 0 0 21 28z" fill="#3aa04a" /><path d="M15 1a14 14 0 0 1 6 27L15 15z" fill="#f4c430" /><path d="M15 1A14 14 0 0 0 3 8l6 6h20A14 14 0 0 0 15 1z" fill="#d8372c" /><circle cx="15" cy="15" r="6.500" fill="#4a8be8" stroke="#fff" strokeWidth="2" /></svg>
        </TaskBtn>
        <TaskBtn $ml={5} $active><RevitTile>R</RevitTile></TaskBtn>
        <TaskBtn $ml={4}>
          <svg width="30" height="30" viewBox="0 0 30 30"><rect x="3" y="3" width="24" height="24" fill="#2f78b8" stroke="#dde" /><path d="M3 20l8-8 6 6 4-3 6 6v6H3z" fill="#9cd0e8" /></svg>
        </TaskBtn>
        <Tray>
          <TrayItem $ml={0}>ES</TrayItem>
          <TrayItem $ml={12}><CircleHelp size={16} fill="#2a3ea8" /></TrayItem>
          <TrayItem $ml={9}>
            <svg width="10" height="20" viewBox="0 0 10 20" fill="#fff"><rect x="2" y="1" width="6" height="2" /><rect x="2" y="5" width="6" height="2" /><path d="M1 17h8l-4-4z" /></svg>
          </TrayItem>
          <TrayItem $ml={34}>
            <svg width="12" height="16" viewBox="0 0 12 16" fill="#fff"><rect x="1" y="1" width="1.500" height="14" /><path d="M3 2h8v7H3z" /></svg>
          </TrayItem>
          <TrayItem $ml={12}>
            <svg width="14" height="16" viewBox="0 0 14 16" fill="none" stroke="#fff"><rect x="2" y="2" width="10" height="8" /><path d="M5 14h4M7 10v4" /></svg>
          </TrayItem>
          <TrayItem $ml={8}>
            <svg width="14" height="14" viewBox="0 0 14 14" fill="#fff"><path d="M1 5h3l4-4v12L4 9H1z" /><path d="M10 4q2 3 0 6" fill="none" stroke="#fff" /></svg>
          </TrayItem>
          <Clock>11:39 a.m.<br />06/10/2014</Clock>
          <ShowDesktop />
        </Tray>
      </Taskbar>
    </Page>
  );
}
